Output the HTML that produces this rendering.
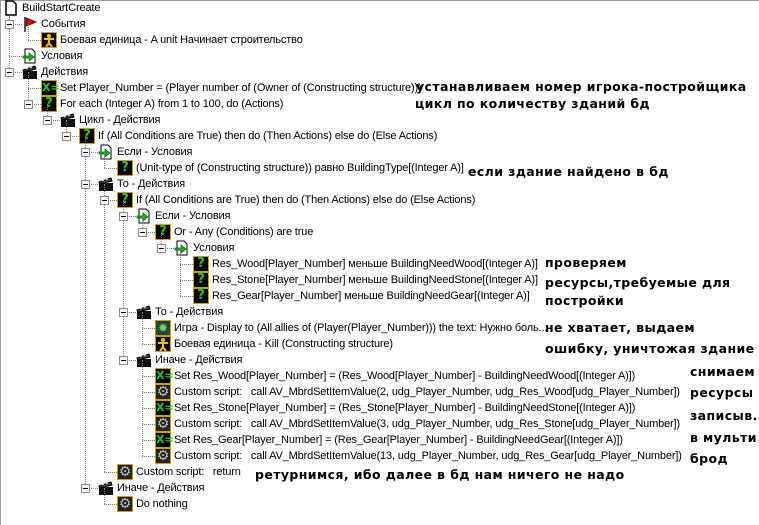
<!DOCTYPE html>
<html><head><meta charset="utf-8">
<style>
body{margin:0;width:759px;height:525px;background:#fff;overflow:hidden;position:relative;font-family:"Liberation Sans","DejaVu Sans",sans-serif;}
#f{position:absolute;left:0;top:0;width:758px;height:524px;border-left:1px solid #a0a0a0;border-top:1px solid #a0a0a0;}
.t{position:absolute;font-size:11px;line-height:16px;white-space:nowrap;color:#000;letter-spacing:-0.15px;top:1px}
.ic{position:absolute;width:16px;height:16px;box-sizing:border-box;}
.ex{position:absolute;width:9px;height:9px;box-sizing:border-box;border:1px solid #8a8a8a;background:#fff;}
.ex:after{content:"";position:absolute;left:1px;top:3px;width:5px;height:1px;background:#000;}
.vl{position:absolute;width:0;border-left:1px dotted #808080;}
.hl{position:absolute;height:0;border-top:1px dotted #808080;}
.b{border:1px solid #c8a000;background:#000;color:#2c2;font:bold 13px/14px "DejaVu Sans",sans-serif;text-align:center;}
.a{position:absolute;font:bold 12.5px/14px "DejaVu Sans",sans-serif;letter-spacing:0.4px;color:#000;white-space:nowrap;}
</style></head><body><div id="f"></div><div id="r"></div>
<div class="a" style="left:416px;top:80px">устанавливаем номер игрока-постройщика</div>
<div class="a" style="left:415px;top:97px">цикл по количеству зданий бд</div>
<div class="a" style="left:468px;top:165px">если здание найдено в бд</div>
<div class="a" style="left:545px;top:256px">проверяем</div>
<div class="a" style="left:545px;top:276px">ресурсы,требуемые для</div>
<div class="a" style="left:545px;top:294px">постройки</div>
<div class="a" style="left:545px;top:321px">не хватает, выдаем</div>
<div class="a" style="left:545px;top:342px">ошибку, уничтожая здание</div>
<div class="a" style="left:690px;top:365px">снимаем</div>
<div class="a" style="left:690px;top:386px">ресурсы</div>
<div class="a" style="left:690px;top:409px">записыв.</div>
<div class="a" style="left:690px;top:431px">в мульти</div>
<div class="a" style="left:690px;top:452px">брод</div>
<div class="a" style="left:255px;top:468px">ретурнимся, ибо далее в бд нам ничего не надо</div>
<script>
var rows=[
[0,'doc','BuildStartCreate'],
[1,'flag','События'],
[2,'unit','Боевая единица - A unit Начинает строительство'],
[1,'cond','Условия'],
[1,'act','Действия'],
[2,'set','Set Player_Number = (Player number of (Owner of (Constructing structure)))'],
[2,'q','For each (Integer A) from 1 to 100, do (Actions)'],
[3,'act','Цикл - Действия'],
[4,'q','If (All Conditions are True) then do (Then Actions) else do (Else Actions)'],
[5,'cond','Если - Условия'],
[6,'q','(Unit-type of (Constructing structure)) равно BuildingType[(Integer A)]'],
[5,'act','То - Действия'],
[6,'q','If (All Conditions are True) then do (Then Actions) else do (Else Actions)'],
[7,'cond','Если - Условия'],
[8,'q','Or - Any (Conditions) are true'],
[9,'cond','Условия'],
[10,'q','Res_Wood[Player_Number] меньше BuildingNeedWood[(Integer A)]'],
[10,'q','Res_Stone[Player_Number] меньше BuildingNeedStone[(Integer A)]'],
[10,'q','Res_Gear[Player_Number] меньше BuildingNeedGear[(Integer A)]'],
[7,'act','То - Действия'],
[8,'game','Игра - Display to (All allies of (Player(Player_Number))) the text: Нужно боль...'],
[8,'unit','Боевая единица - Kill (Constructing structure)'],
[7,'act','Иначе - Действия'],
[8,'set','Set Res_Wood[Player_Number] = (Res_Wood[Player_Number] - BuildingNeedWood[(Integer A)])'],
[8,'gear','Custom script:&nbsp;&nbsp; call AV_MbrdSetItemValue(2, udg_Player_Number, udg_Res_Wood[udg_Player_Number])'],
[8,'set','Set Res_Stone[Player_Number] = (Res_Stone[Player_Number] - BuildingNeedStone[(Integer A)])'],
[8,'gear','Custom script:&nbsp;&nbsp; call AV_MbrdSetItemValue(3, udg_Player_Number, udg_Res_Stone[udg_Player_Number])'],
[8,'set','Set Res_Gear[Player_Number] = (Res_Gear[Player_Number] - BuildingNeedGear[(Integer A)])'],
[8,'gear','Custom script:&nbsp;&nbsp; call AV_MbrdSetItemValue(13, udg_Player_Number, udg_Res_Gear[udg_Player_Number])'],
[6,'gear','Custom script:&nbsp;&nbsp; return'],
[5,'act','Иначе - Действия'],
[6,'gear','Do nothing']];
function icon(k){
switch(k){
case 'doc':return '<svg width="16" height="16"><path d="M3 1h7l3 3v11H3z" fill="#fff" stroke="#000" stroke-width="1.5"/></svg>';
case 'flag':return '<svg width="16" height="16"><rect x="2" y="1" width="2" height="15" fill="#555"/><path d="M4 2l10 4-10 4z" fill="#d00" stroke="#700"/></svg>';
case 'unit':return '<div class="ic b" style="position:static"><svg width="14" height="14"><circle cx="7" cy="3" r="2" fill="#f0c000"/><path d="M2 6h10M7 5v5M7 10l-3 4M7 10l3 4" stroke="#f0c000" stroke-width="2"/></svg></div>';
case 'cond':return '<svg width="16" height="16"><path d="M3 1h7l3 3v11H3z" fill="#fff" stroke="#000"/><path d="M1 8h6V5l5 4-5 4v-3H1z" fill="#2a2" stroke="#060" stroke-width=".7"/></svg>';
case 'act':return '<svg width="16" height="16"><rect x="1" y="7" width="14" height="8" fill="#111"/><path d="M1 6l12-4 1 3-12 3z" fill="#333" stroke="#000"/><path d="M4 5l2-1M8 4l2-1" stroke="#ddd"/></svg>';
case 'set':return '<div class="ic b" style="position:static;font-size:11px">X=</div>';
case 'q':return '<div class="ic b" style="position:static">?</div>';
case 'gear':return '<div class="ic" style="position:static;background:#222;border:1px solid #c8a000;color:#bbb;font:14px/14px \'DejaVu Sans\';text-align:center">⚙</div>';
case 'game':return '<div class="ic" style="position:static;background:#243;border:1px solid #c8a000;color:#7c5;font:12px/14px \'DejaVu Sans\';text-align:center">✹</div>';
}}
var h='',n=rows.length;
for(var i=0;i<n;i++){
var L=rows[i][0],x=3+19*L,y=i*16,hasC=(i+1<n&&rows[i+1][0]>L);
h+='<div class="ic" style="left:'+x+'px;top:'+y+'px">'+icon(rows[i][1])+'</div>';
h+='<div class="t" style="left:'+(x+19)+'px;top:'+y+'px">'+rows[i][2]+'</div>';
if(L>0){var lx=19*L-10;h+='<div class="hl" style="left:'+lx+'px;top:'+(y+8)+'px;width:'+(x-lx)+'px"></div>';}
if(hasC){var last=i;for(var j=i+1;j<n&&rows[j][0]>L;j++)if(rows[j][0]==L+1)last=j;
var vx=19*(L+1)-10;h+='<div class="vl" style="left:'+vx+'px;top:'+(y+(L==0?16:8))+'px;height:'+((last-i)*16-(L==0?8:0))+'px"></div>';}
}
for(var i=0;i<n;i++){var L=rows[i][0];if(i+1<n&&rows[i+1][0]>L&&L>0){h+='<div class="ex" style="left:'+(3+19*L-17)+'px;top:'+(i*16+4)+'px"></div>';}}
document.getElementById('r').innerHTML=h;
</script>
</body></html>
